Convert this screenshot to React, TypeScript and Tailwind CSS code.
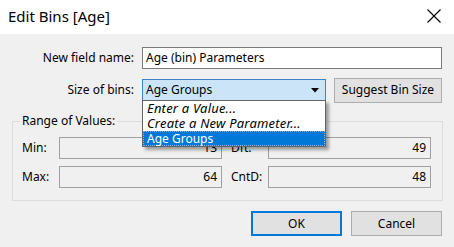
export default function App() {
  return (
    <div className="w-[454px] h-[247px] bg-[#f0f0f0] text-black text-[12px] leading-[16px] font-['Noto_Sans','Open_Sans',sans-serif] overflow-hidden">
      <div className="h-[34px] bg-white flex items-center justify-between pl-[8px] pr-[13px]">
        <span className="text-[15px] leading-[20px] -mt-[2px]">Edit Bins [Age]</span>
        <svg width="14" height="14" viewBox="0 0 14 14" className="-mt-[2px]">
          <path d="M0.5 0.5 L13.5 13.5 M13.5 0.5 L0.5 13.5" stroke="#000" strokeWidth="1.1" fill="none" />
        </svg>
      </div>

      <div className="px-[12px]">
        <div className="mt-[13px] flex items-center h-[22px]">
          <div className="w-[130px] pr-[8px] text-right">New field name:</div>
          <div className="w-[300px] h-[22px] border border-[#7a7a7a] bg-white flex items-center px-[3px]">
            Age (bin) Parameters
          </div>
        </div>

        <div className="mt-[8px] flex items-center h-[26px]">
          <div className="w-[130px] pr-[8px] text-right">Size of bins:</div>
          <div className="relative w-[184px] h-[22px] border border-[#3d84c6] bg-[#cce4f7] flex items-center justify-between pl-[3px] pr-[6px]">
            <span>Age Groups</span>
            <svg width="8" height="5" viewBox="0 0 8 5">
              <path d="M0 0 L8 0 L4 4.5 Z" fill="#000" />
            </svg>
            <div className="absolute left-[-1px] top-[20px] w-[184px] bg-white border border-[#646464] shadow-[3px_3px_3px_rgba(0,0,0,0.35)] z-10 flex flex-col">
              <div className="h-[15px] px-[4px] italic text-[13px] leading-[15px] tracking-[0.2px]">Enter a Value...</div>
              <div className="h-[15px] px-[4px] italic text-[13px] leading-[15px] tracking-[0.2px]">Create a New Parameter...</div>
              <div className="h-[15px] px-[3px] leading-[13px] bg-[#0078d7] text-white border border-dotted border-[#8ab4dc]">Age Groups</div>
            </div>
          </div>
          <div className="ml-[8px] w-[108px] h-[25px] border border-[#adadad] bg-[#e1e1e1] flex items-center justify-center">
            Suggest Bin Size
          </div>
        </div>

        <fieldset className="mt-[10px] border border-[#dcdcdc] w-[431px] h-[88px] pl-[9px] pr-[11px]">
          <legend className="-ml-[2px] px-[2px] leading-[16px]">Range of Values:</legend>
          <div className="mt-[8px] grid grid-cols-[37px_163px_46px_163px] gap-y-[7px] items-center">
            <span>Min:</span>
            <div className="h-[22px] border border-[#a0a0a0] bg-[#f0f0f0] flex items-center justify-end px-[4px]">13</div>
            <span className="pl-[9px]">Dft:</span>
            <div className="h-[22px] border border-[#a0a0a0] bg-[#f0f0f0] flex items-center justify-end px-[4px]">49</div>
            <span>Max:</span>
            <div className="h-[22px] border border-[#a0a0a0] bg-[#f0f0f0] flex items-center justify-end px-[4px]">64</div>
            <span className="pl-[9px]">CntD:</span>
            <div className="h-[22px] border border-[#a0a0a0] bg-[#f0f0f0] flex items-center justify-end px-[4px]">48</div>
          </div>
        </fieldset>

        <div className="mt-[10px] flex justify-end gap-[9px] w-[430px]">
          <div className="w-[91px] h-[25px] border-2 border-[#0078d7] bg-[#e1e1e1] flex items-center justify-center">OK</div>
          <div className="w-[91px] h-[25px] border border-[#adadad] bg-[#e1e1e1] flex items-center justify-center">Cancel</div>
        </div>
      </div>
    </div>
  );
}
